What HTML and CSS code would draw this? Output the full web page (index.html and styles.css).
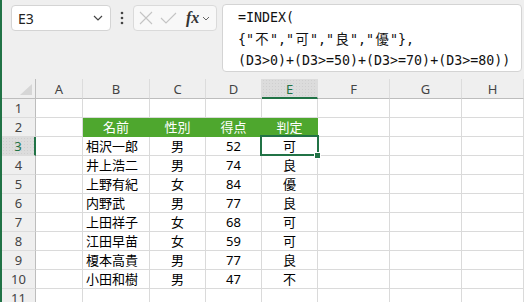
FILE: index.html
```html
<!DOCTYPE html>
<html>
<head>
    <meta charset="utf-8">
    <link rel="stylesheet" href="styles.css">
</head>
<body>
<div class="bar">
    <div class="name-box">
        <span>E3</span>
        <svg class="chev" width="10" height="6" viewBox="0 0 10 6"><path d="M1 1l4 4 4-4" fill="none" stroke="#444" stroke-width="1.2"/></svg>
    </div>
    <div class="dots">
        <svg width="4" height="14" viewBox="0 0 4 14"><circle cx="2" cy="2" r="1.3" fill="#444"/><circle cx="2" cy="7" r="1.3" fill="#444"/><circle cx="2" cy="12" r="1.3" fill="#444"/></svg>
    </div>
    <div class="fx-box">
        <svg width="14" height="14" viewBox="0 0 14 14"><path d="M1 1l12 12M13 1L1 13" stroke="#c4c4c4" stroke-width="1.1" fill="none"/></svg>
        <svg width="17" height="12" viewBox="0 0 17 12"><path d="M1 6l5 5L16 1" stroke="#c4c4c4" stroke-width="1.1" fill="none"/></svg>
        <span class="fx">fx</span>
        <svg width="8" height="5" viewBox="0 0 8 5"><path d="M1 1l3 3 3-3" fill="none" stroke="#666" stroke-width="1"/></svg>
    </div>
    <div class="formula">
        <div>=INDEX(</div>
        <div>{"<span class="w">不</span>","<span class="w">可</span>","<span class="w">良</span>","<span class="w">優</span>"},</div>
        <div>(D3&gt;0)+(D3&gt;=50)+(D3&gt;=70)+(D3&gt;=80))</div>
    </div>
</div>
<div class="sheet">
    <div class="row head">
        <div class="corner"><svg width="12" height="11" viewBox="0 0 12 11"><path d="M12 0V11H0z" fill="#d6d6d6"/></svg></div>
        <div>A</div><div>B</div><div>C</div><div>D</div><div class="sel">E</div><div>F</div><div>G</div><div>H</div>
    </div>
    <div class="row">
        <div class="rh">1</div><div></div><div></div><div></div><div></div><div></div><div></div><div></div><div></div>
    </div>
    <div class="row">
        <div class="rh">2</div><div></div><div class="g">名前</div><div class="g">性別</div><div class="g">得点</div><div class="g">判定</div><div></div><div></div><div></div>
    </div>
    <div class="row">
        <div class="rh sel">3</div><div></div><div class="l">相沢一郎</div><div>男</div><div>52</div><div class="active">可</div><div></div><div></div><div></div>
    </div>
    <div class="row">
        <div class="rh">4</div><div></div><div class="l">井上浩二</div><div>男</div><div>74</div><div>良</div><div></div><div></div><div></div>
    </div>
    <div class="row">
        <div class="rh">5</div><div></div><div class="l">上野有紀</div><div>女</div><div>84</div><div>優</div><div></div><div></div><div></div>
    </div>
    <div class="row">
        <div class="rh">6</div><div></div><div class="l">内野武</div><div>男</div><div>77</div><div>良</div><div></div><div></div><div></div>
    </div>
    <div class="row">
        <div class="rh">7</div><div></div><div class="l">上田祥子</div><div>女</div><div>68</div><div>可</div><div></div><div></div><div></div>
    </div>
    <div class="row">
        <div class="rh">8</div><div></div><div class="l">江田早苗</div><div>女</div><div>59</div><div>可</div><div></div><div></div><div></div>
    </div>
    <div class="row">
        <div class="rh">9</div><div></div><div class="l">榎本高貴</div><div>男</div><div>77</div><div>良</div><div></div><div></div><div></div>
    </div>
    <div class="row">
        <div class="rh">10</div><div></div><div class="l">小田和樹</div><div>男</div><div>47</div><div>不</div><div></div><div></div><div></div>
    </div>
    <div class="row">
        <div class="rh">11</div><div></div><div></div><div></div><div></div><div></div><div></div><div></div><div></div>
    </div>
</div>
</body>
</html>
```

FILE: styles.css
```css
body{
    margin:0;
    height:302px;
    overflow:hidden;
    border-left:2px solid #217346;
    box-sizing:border-box;
    background:#fff;
    font-family:"Noto Sans","Noto Sans CJK JP",sans-serif;
    color:#000;
}
.bar{
    height:79px;
    box-sizing:border-box;
    background:#efefef;
    display:flex;
    align-items:flex-start;
    padding:4px 0 0 9px;
}
.name-box{
    width:100px;
    height:26px;
    margin-top:1px;
    box-sizing:border-box;
    background:#fff;
    border:1px solid #d4d4d4;
    border-radius:4px;
    display:flex;
    align-items:center;
    justify-content:space-between;
    padding:0 7px 0 6px;
    font-size:14px;
    color:#222;
}
.dots{
    width:22px;
    height:26px;
    margin-top:1px;
    display:flex;
    align-items:center;
    justify-content:center;
}
.fx-box{
    width:84px;
    height:26px;
    margin-top:1px;
    box-sizing:border-box;
    background:#f8f8f8;
    border:1px solid #dadada;
    border-radius:4px;
    display:flex;
    align-items:center;
    padding:0 4px 0 5px;
    gap:7px;
}
.fx-box .fx{
    font-family:"Liberation Serif",serif;
    font-style:italic;
    font-weight:bold;
    font-size:16px;
    color:#333;
    margin-left:2px;
    margin-right:-4px;
}
.formula{
    width:300px;
    height:68px;
    margin-left:5px;
    box-sizing:border-box;
    background:#fff;
    border:1px solid #d4d4d4;
    border-radius:4px;
    padding:2px 0 0 15px;
    font-family:"DejaVu Sans Mono","Noto Sans CJK JP",monospace;
    font-size:13.3px;
    line-height:21.5px;
    color:#111;
    white-space:nowrap;
}
.formula .w{
    display:inline-block;
    width:2ch;
    text-align:center;
}
.row{
    display:grid;
    grid-template-columns:34px 47px 67px 56px 56px 56px 72px 72px 1fr;
    height:19px;
}
.row > div{
    box-sizing:border-box;
    border-right:1px solid #dadada;
    border-bottom:1px solid #dadada;
    display:flex;
    align-items:center;
    justify-content:center;
    font-size:13px;
    line-height:16px;
    white-space:nowrap;
}
.row > div.l{
    justify-content:flex-start;
    padding-left:3px;
}
.row.head{
    height:20px;
    background:#efefef;
}
.row.head > div{
    border-bottom-color:#bdbdbd;
    border-right-color:#dcdcdc;
    color:#444;
    padding-top:1px;
}
.row.head > div.corner{
    justify-content:flex-end;
    align-items:flex-end;
    padding:0 3px 3px 0;
    border-right-color:#bdbdbd;
}
.row > div.rh{
    background:#efefef;
    color:#444;
    border-right-color:#bdbdbd;
    border-bottom-color:#dcdcdc;
}
.row > div.sel{
    background:#dcdcdc radial-gradient(circle, #cfcfcf 0.6px, transparent 0.8px) 0 0/3px 3px;
    color:#217346;
}
.row.head > div.sel{
    border-bottom:2px solid #217346;
}
.row > div.rh.sel{
    border-right:2px solid #217346;
}
.row > div.g{
    background:#4ea72e;
    color:#fff;
    border-color:#4ea72e;
}
.row > div.active{
    position:relative;
}
.row > div.active::after{
    content:"";
    position:absolute;
    left:-2px;
    top:-2px;
    right:-2px;
    bottom:-1px;
    border:2px solid #217346;
}
.row > div.active::before{
    content:"";
    position:absolute;
    right:-4px;
    bottom:-4px;
    width:5px;
    height:5px;
    background:#217346;
    border:1px solid #fff;
    z-index:1;
}
```
